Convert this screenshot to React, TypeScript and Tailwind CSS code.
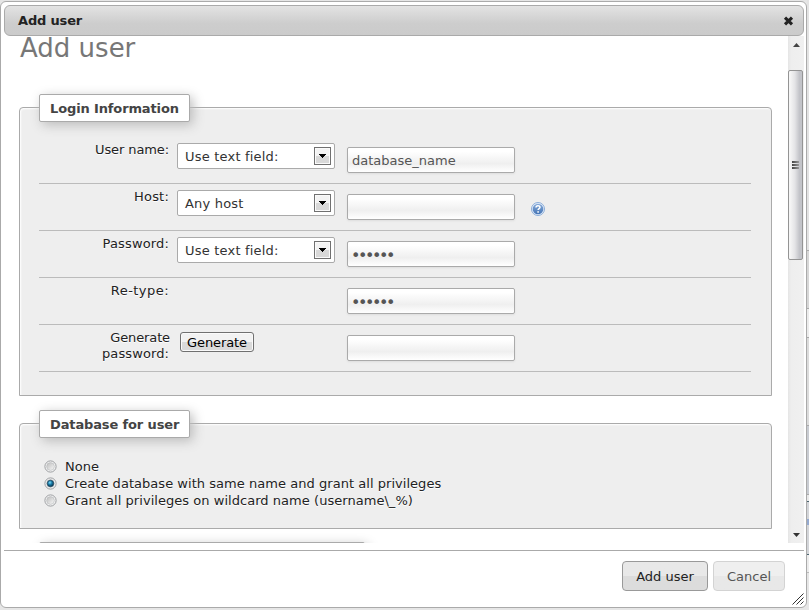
import type { ReactNode } from "react";

function Legend({ children }: { children: ReactNode }) {
  return (
    <div className="relative ml-[19px] -mt-[14px] h-[28px] w-[151px] rounded-[2px] border border-[#aaa] bg-white pl-[10px] text-[13px] leading-[27px] font-bold tracking-[-0.13px] whitespace-nowrap text-[#444] shadow-[3px_3px_12px_#bbb]">
      {children}
    </div>
  );
}

function Select({ label }: { label: string }) {
  return (
    <div className="mt-[6px] ml-[8px] flex h-[26px] w-[158px] shrink-0 items-center justify-between rounded-[2px] border border-[#aaa] bg-white pr-[3px] pl-[7px] text-[#333]">
      <span className="tracking-[0.2px]">{label}</span>
      <span className="flex h-[18px] w-[17px] items-center justify-center border border-[#707070] bg-linear-to-b from-[#f3f3f3] from-50% to-[#d8d8d8] to-50% shadow-[inset_0_0_0_1px_#fafafa]">
        <svg width="7" height="4" viewBox="0 0 7 4" shapeRendering="crispEdges">
          <path d="M0 0h7v1h-1v1h-1v1h-1v1h-1v-1h-1v-1h-1v-1h-1z" fill="#000" />
        </svg>
      </span>
    </div>
  );
}

function Field({ value = "", password = false }: { value?: string; password?: boolean }) {
  return (
    <input
      readOnly
      value={value}
      className={
        "mt-[10px] h-[26px] w-[168px] shrink-0 rounded-[2px] border border-[#aaa] bg-linear-to-b from-white from-15% via-[#efefef] via-65% to-white text-[#555] shadow-[0_1px_2px_#ddd] outline-none " +
        (password ? "px-[3px] pt-[2px] text-[16px] tracking-[-2.44px]" : "px-[4px] text-[13px] tracking-normal")
      }
    />
  );
}

function Row({
  label,
  spacing = "tracking-normal",
  control,
  children,
}: {
  label: ReactNode;
  spacing?: string;
  control?: ReactNode;
  children: ReactNode;
}) {
  return (
    <div className="flex h-[47px] items-start border-b border-[#bbb]">
      <div className={"mt-[5px] w-[130px] shrink-0 text-right leading-4 [text-shadow:0_1px_0_#fff] " + spacing}>
        {label}
      </div>
      <div className="w-[178px] shrink-0">{control}</div>
      {children}
    </div>
  );
}

function Radio({ label, checked = false }: { label: string; checked?: boolean }) {
  return (
    <div className="flex h-[17px] items-center">
      <svg width="13" height="13" viewBox="0 0 13 13" className="mr-[8px] shrink-0">
        <defs>
          <linearGradient id="well" x1="0" y1="0" x2="1" y2="1">
            <stop offset="0" stopColor="#bbb" />
            <stop offset="1" stopColor="#fafafa" />
          </linearGradient>
          <radialGradient id="dot" cx=".4" cy=".35" r=".6">
            <stop offset="0" stopColor="#83dcf6" />
            <stop offset=".5" stopColor="#1b80ad" />
            <stop offset="1" stopColor="#0c405e" />
          </radialGradient>
        </defs>
        <circle cx="6.5" cy="6.5" r="5.6" fill="#f7f7f7" stroke="#929497" strokeWidth=".9" />
        <circle cx="6.5" cy="6.5" r="3.9" fill="url(#well)" stroke="#b5b8bb" strokeWidth=".6" />
        {checked && <circle cx="6.5" cy="6.5" r="3.2" fill="url(#dot)" stroke="#153d55" strokeWidth=".7" />}
      </svg>
      <span className="tracking-[0.04px] whitespace-nowrap [text-shadow:0_1px_0_#fff]">{label}</span>
    </div>
  );
}

function HelpIcon() {
  return (
    <svg width="14" height="14" viewBox="0 0 14 14" className="mt-[18px] ml-[16px] shrink-0">
      <defs>
        <linearGradient id="help" x1="0" y1="0" x2="0" y2="1">
          <stop offset="0" stopColor="#87abd9" />
          <stop offset="1" stopColor="#4474b5" />
        </linearGradient>
      </defs>
      <circle cx="7" cy="7" r="6.5" fill="#e5eefa" stroke="#7ea4d5" strokeWidth=".9" />
      <circle cx="7" cy="7" r="5.3" fill="url(#help)" />
      <path d="M5 5.5C5 3.2 9 3.2 9 5.3C9 6.6 7.1 6.6 7.1 8.1" fill="none" stroke="#fff" strokeWidth="1.5" />
      <rect x="6.3" y="9.2" width="1.6" height="1.5" fill="#fff" />
    </svg>
  );
}

function Scrollbar() {
  return (
    <div className="flex h-[507px] w-[16px] shrink-0 flex-col items-center bg-linear-to-r from-[#e5e5e5] via-[#eee] via-20% to-[#f0f0f0]">
      <svg width="7" height="4" viewBox="0 0 7 4" className="mt-[7px] ml-px">
        <path d="M3.5 0L7 4H0z" fill="#444" />
      </svg>
      <div className="mt-[23px] mr-px flex h-[190px] w-[15px] shrink-0 flex-col items-center justify-center gap-px rounded-[2px] border border-[#949494] bg-linear-to-r from-[#f5f5f5] from-10% via-[#e4e4e6] via-45% to-[#c3c4c9] to-80%">
        {[0, 1, 2].map((i) => (
          <span key={i} className="h-[2px] w-[7px] bg-linear-to-r from-[#444] to-[#999]" />
        ))}
      </div>
      <svg width="7" height="4" viewBox="0 0 7 4" className="mt-auto mb-[6px] ml-px">
        <path d="M0 0H7L3.5 4z" fill="#333" />
      </svg>
    </div>
  );
}

function PageEdge() {
  return (
    <div className="flex h-[610px] w-[2px] flex-col">
      <div className="h-[251px] border-b border-[#aaa] bg-[#e3e3e3]" />
      <div className="h-[58px] border-b border-[#aaa] bg-[#d7d7d7]" />
      <div className="h-[29px] border-b border-[#aaa] bg-[#ececec]" />
      <div className="h-[88px] border-b border-[#aaa] bg-[#dcdcdc]" />
      <div className="h-[69px] border-b border-[#aaa] bg-[#c9ccd2]" />
      <div className="h-[7px] border-b border-[#4d6670] bg-[#e9e9e9]" />
      <div className="h-[17px] bg-[#d3d5d9]" />
      <div className="h-[6px] bg-[#95aad0]" />
      <div className="h-[30px] border-b border-[#4d6670] bg-[#d3d5d9]" />
      <div className="h-[18px] border-b border-[#bbb] bg-[#ececec]" />
      <div className="flex-1 bg-[#e6e6e6]" />
    </div>
  );
}

const panel =
  "w-[753px] rounded-t-[4px] border border-[#aaa] bg-[#eee] shadow-[inset_1px_1px_2px_#fff]";

export default function App() {
  return (
    <div className="flex h-[610px] w-[809px] overflow-hidden bg-[#e6e6e6] font-['DejaVu_Sans',Verdana,sans-serif] text-[13px] leading-[17px] text-[#222]">
      <div className="mt-px flex h-[607px] w-[807px] shrink-0 flex-col rounded-[6px] border border-[#aaa] bg-white pt-[3px] pr-[2px] pl-[3px]">
        <div className="flex h-[31px] w-[800px] shrink-0 items-center justify-between rounded-[6px] border border-[#aaa] bg-linear-to-b from-[#e3e3e3] via-[#cdcdcd] via-60% to-[#cbcbcb] pr-[9px] pl-[13px]">
          <span className="font-bold tracking-[-0.17px]">Add user</span>
          <svg width="11" height="10" viewBox="0 0 11 10">
            <path d="M2 1.6L9 8.4M9 1.6L2 8.4" stroke="#222" strokeWidth="3.1" />
          </svg>
        </div>

        <div className="flex h-[507px] w-[800px] shrink-0">
          <div className="h-[507px] w-[784px] pl-[15px] [clip-path:inset(-8px_0_0_0)]">
            <h1 className="h-[71px] pt-px pl-px text-[26px] leading-[22px] text-[#777]">Add user</h1>

            <div className={panel + " h-[289px]"}>
              <Legend>Login Information</Legend>
              <div className="mt-[15px] ml-[19px] w-[712px]">
                <Row label="User name:" spacing="tracking-[-0.1px]" control={<Select label="Use text field:" />}>
                  <Field value="database_name" />
                </Row>
                <Row label="Host:" spacing="tracking-[0.2px]" control={<Select label="Any host" />}>
                  <Field />
                  <HelpIcon />
                </Row>
                <Row label="Password:" spacing="tracking-[0.15px]" control={<Select label="Use text field:" />}>
                  <Field value="••••••" password />
                </Row>
                <Row label="Re-type:" spacing="tracking-[0.45px]">
                  <Field value="••••••" password />
                </Row>
                <Row
                  label={
                    <>
                      <span className="mr-[-1px] tracking-[-0.13px]">Generate</span>
                      <br />
                      <span className="tracking-[0.1px]">password:</span>
                    </>
                  }
                  control={
                    <button className="mt-[7px] ml-[11px] flex h-[20px] w-[74px] items-center justify-center rounded-[3px] border border-[#707070] bg-linear-to-b from-[#f2f2f2] from-50% to-[#dadada] to-50% text-[13px] tracking-[-0.1px] text-black shadow-[inset_0_0_0_1px_#fafafa]">
                      Generate
                    </button>
                  }
                >
                  <Field />
                </Row>
              </div>
            </div>

            <div className={panel + " mt-[27px] h-[106px]"}>
              <Legend>Database for user</Legend>
              <div className="mt-[20px] ml-[24px]">
                <Radio label="None" />
                <Radio label="Create database with same name and grant all privileges" checked />
                <Radio label="Grant all privileges on wildcard name (username\_%)" />
              </div>
            </div>

            <div className="mt-[13px] ml-[20px] h-[28px] w-[326px] rounded-[2px] border border-[#aaa] bg-white shadow-[3px_3px_12px_#bbb]" />
          </div>
          <Scrollbar />
        </div>

        <div className="mt-[7px] flex h-[56px] w-[800px] shrink-0 justify-end border-t border-[#aaa]">
          <button className="mt-[10px] h-[30px] w-[86px] rounded-[4px] border border-[#999] bg-linear-to-b from-[#e8e8e8] from-50% to-[#dcdcdc] to-50% text-[13px] text-[#222]">
            Add user
          </button>
          <button className="mt-[10px] ml-[5px] h-[30px] w-[72px] rounded-[4px] border border-[#d3d3d3] bg-linear-to-b from-[#efefef] from-50% to-[#e8e8e8] to-50% text-[13px] text-[#555]">
            Cancel
          </button>
          <svg width="12" height="12" viewBox="0 0 12 12" className="mt-[42px] ml-[7px] shrink-0">
            <path d="M0.5 11.5L11.5 0.5M4.5 11.5L11.5 4.5M8.5 11.5L11.5 8.5" stroke="#333" strokeWidth="1" />
          </svg>
        </div>
      </div>
      <PageEdge />
    </div>
  );
}
